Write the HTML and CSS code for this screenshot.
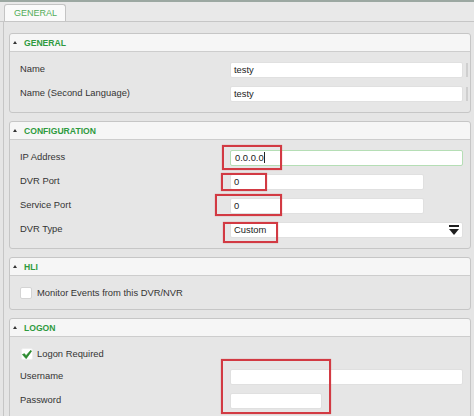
FILE: index.html
```html
<!DOCTYPE html>
<html>
<head>
<meta charset="utf-8">
<link rel="stylesheet" href="styles.css">
</head>
<body>
<div class="topbar"></div>
<div class="tabstrip">
  <div class="tab">GENERAL</div>
</div>
<div class="content">
  <section class="panel">
    <div class="panel-head"><span class="tri"></span>GENERAL</div>
    <div class="panel-body grid">
      <label class="lbl">Name</label>
      <div class="cell"><div class="input">testy</div><span class="scroll"></span></div>
      <label class="lbl">Name (Second Language)</label>
      <div class="cell"><div class="input">testy</div><span class="scroll"></span></div>
    </div>
  </section>

  <section class="panel">
    <div class="panel-head"><span class="tri"></span>CONFIGURATION</div>
    <div class="panel-body grid">
      <label class="lbl">IP Address</label>
      <div class="cell"><div class="input focus">0.0.0.0<span class="caret"></span></div></div>
      <label class="lbl">DVR Port</label>
      <div class="cell"><div class="input short">0</div></div>
      <label class="lbl">Service Port</label>
      <div class="cell"><div class="input short">0</div></div>
      <label class="lbl">DVR Type</label>
      <div class="cell"><div class="input select">Custom
        <svg class="arrow" width="10" height="10" viewBox="0 0 10 10"><rect x="0" y="0" width="10" height="2" fill="#1e1e1e"/><polygon points="0,4 10,4 5,10" fill="#1e1e1e"/></svg>
      </div></div>
    </div>
  </section>

  <section class="panel">
    <div class="panel-head"><span class="tri"></span>HLI</div>
    <div class="panel-body hli">
      <div class="check-row"><span class="box"></span><span class="lbl">Monitor Events from this DVR/NVR</span></div>
    </div>
  </section>

  <section class="panel">
    <div class="panel-head"><span class="tri"></span>LOGON</div>
    <div class="panel-body logon">
      <div class="check-row"><span class="box checked"><svg width="12" height="11" viewBox="0 0 12 11"><path d="M0.5 5.5 L3 4.5 L4.8 7 L10.5 0.5 L11.5 1.5 L5 10.5 Z" fill="#2a8a2e" stroke="#2a8a2e" stroke-width="0.8" stroke-linejoin="round"/></svg></span><span class="lbl">Logon Required</span></div>
      <div class="grid">
        <label class="lbl">Username</label>
        <div class="cell"><div class="input"></div></div>
        <label class="lbl">Password</label>
        <div class="cell"><div class="input pw"></div></div>
      </div>
    </div>
  </section>
</div>

<div class="mark m-ip"></div>
<div class="mark m-dvr"></div>
<div class="mark m-svc"></div>
<div class="mark m-type"></div>
<div class="mark m-logon"></div>
</body>
</html>
```

FILE: styles.css
```css
html, body {
  margin: 0;
  padding: 0;
}
body {
  width: 474px;
  height: 416px;
  overflow: hidden;
  background: #e5e5e5;
  font-family: "Liberation Sans", Arial, sans-serif;
  color: #333;
  position: relative;
}
.topbar {
  height: 2px;
  background: #9ca8a2;
}
.tabstrip {
  height: 19px;
  background: #e9e9e9;
  border-bottom: 1px solid #c6c6c6;
  padding-left: 4px;
  display: flex;
  align-items: flex-end;
}
.tab {
  width: 62px;
  height: 17px;
  box-sizing: border-box;
  border: 1px solid #c4c4c4;
  border-bottom: none;
  border-radius: 3px 3px 0 0;
  background: #fafafa;
  color: #52ad58;
  font-size: 9px;
  line-height: 16px;
  padding-left: 9px;
}
.content {
  margin-left: 3px;
  border-left: 1px solid #c6c6c6;
  padding: 11px 3px 0 5px;
  min-height: 400px;
}
.panel {
  border: 1px solid #c6c6c6;
  border-radius: 3px;
  background: #e6e6e6;
  margin-bottom: 8px;
}
.panel-head {
  height: 17px;
  background: #f6f6f6;
  border-bottom: 1px solid #cdcdcd;
  border-radius: 3px 3px 0 0;
  display: flex;
  align-items: center;
  padding-left: 3px;
  color: #2e9a3e;
  font-weight: bold;
  font-size: 8.6px;
}
.tri {
  width: 0;
  height: 0;
  border-left: 2.5px solid transparent;
  border-right: 2.5px solid transparent;
  border-bottom: 3px solid #333;
  margin-right: 7px;
  margin-top: -1px;
}
.panel-body {
  padding: 10px 7px 10px 10px;
}
.grid {
  display: grid;
  grid-template-columns: 210px 1fr;
  row-gap: 8px;
  align-items: center;
}
.lbl {
  font-size: 9.4px;
  color: #343434;
  position: relative;
  top: -2px;
}
.cell {
  display: flex;
  align-items: center;
  height: 16px;
}
.input {
  flex: 1;
  height: 16px;
  box-sizing: border-box;
  background: #fff;
  border: 1px solid #e0e0e0;
  border-radius: 2px;
  font-size: 9.4px;
  color: #222;
  line-height: 14px;
  padding-left: 3px;
  position: relative;
}
.scroll {
  width: 2px;
  height: 14px;
  background: #cfcfcf;
  margin-left: 3px;
  margin-right: -5px;
}
.input.focus {
  border-color: #b5deb5;
  padding-left: 4px;
}
.caret {
  display: inline-block;
  width: 1px;
  height: 11px;
  background: #222;
  vertical-align: -2px;
}
.input.short {
  flex: 0 0 194px;
}
.input.pw {
  flex: 0 0 92px;
}
.input.select {
  display: flex;
  align-items: center;
  justify-content: space-between;
  padding-right: 3px;
}
.arrow {
  display: block;
}
.hli {
  padding-top: 9px;
  padding-bottom: 8px;
}
.check-row {
  display: flex;
  align-items: center;
  height: 16px;
}
.check-row .lbl {
  top: -1px;
}
.box {
  width: 12px;
  height: 12px;
  box-sizing: border-box;
  background: #fff;
  border: 1px solid #d4d4d4;
  border-radius: 2px;
  margin-right: 5px;
  display: flex;
  align-items: center;
  justify-content: center;
}
.box.checked {
  border-color: #eeeeee;
  margin-left: 1px;
  margin-right: 4px;
}
.logon {
  padding-top: 9px;
}
.logon .grid {
  margin-top: 7px;
}
.mark {
  position: absolute;
  border: 2px solid #d23a43;
  box-shadow: 0 0 1px rgba(210, 58, 67, 0.6);
  box-sizing: border-box;
}
.m-ip { left: 222px; top: 145px; width: 60px; height: 25px; }
.m-dvr { left: 221px; top: 173px; width: 46px; height: 18px; }
.m-svc { left: 215px; top: 194px; width: 67px; height: 22px; }
.m-type { left: 223px; top: 222px; width: 55px; height: 21px; }
.m-logon { left: 221px; top: 359px; width: 110px; height: 55px; }
```
